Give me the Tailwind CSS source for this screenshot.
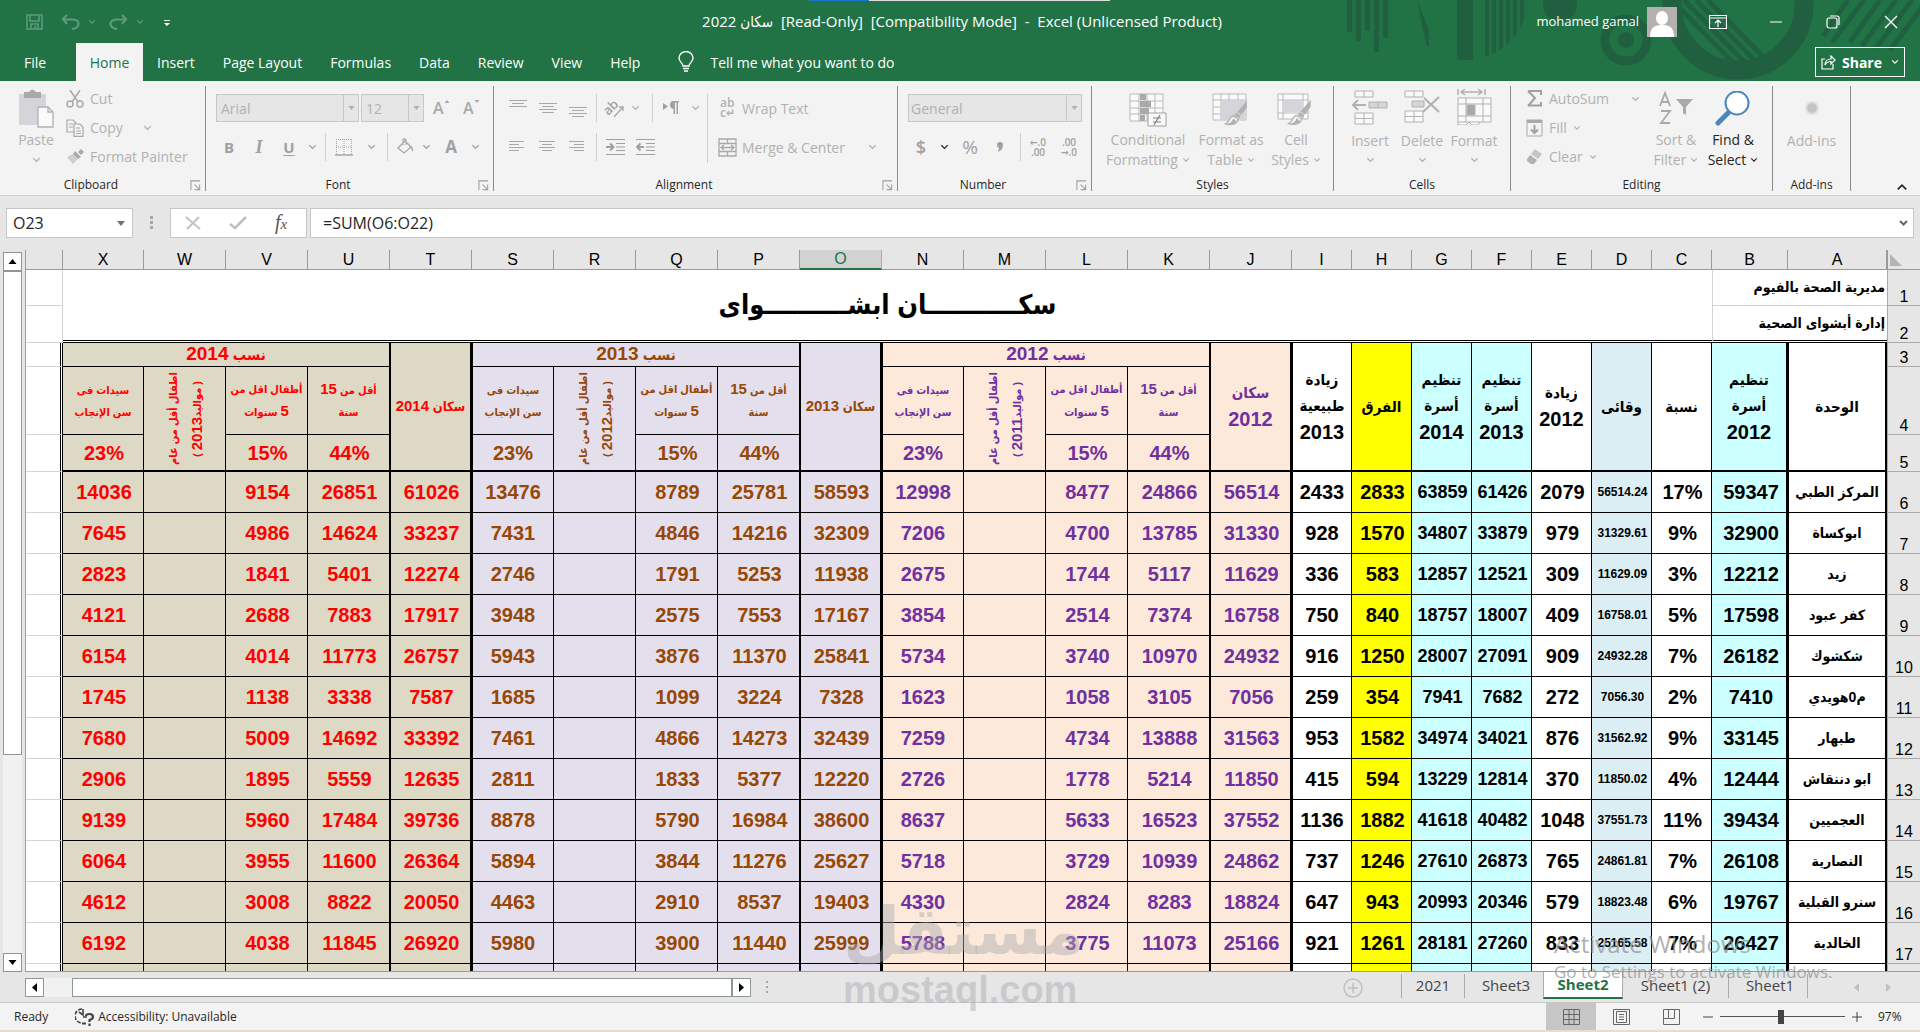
<!DOCTYPE html>
<html lang="en">
<head>
    <meta charset="UTF-8">
    <meta name="viewport" content="width=device-width, initial-scale=1.0">
    <title>سكان 2022 - Excel</title>
    <script src="https://cdn.jsdelivr.net/npm/@tailwindcss/browser@4"></script>
</head>
<body class="flex flex-col h-screen overflow-hidden bg-[#e6e6e6] font-['Open_Sans','DejaVu_Sans_Condensed','DejaVu_Sans',sans-serif] text-[13px] text-[#262626]">

    <!-- Shared icons -->
    <svg class="hidden">
        <symbol id="chev" viewBox="0 0 10 6"><path d="M1.5 1 5 4.5 8.5 1" fill="none" stroke="currentColor" stroke-width="1.4"/></symbol>
        <symbol id="caret" viewBox="0 0 8 5"><path d="M0 0H8L4 5Z" fill="currentColor"/></symbol>
        <symbol id="launch" viewBox="0 0 12 12"><path d="M1 11V1H11M5 5 10 10M10.500 5V10.500H5" fill="none" stroke="#a0a0a0" stroke-width="1.200"/></symbol>
        <symbol id="brush" viewBox="0 0 28 34"><path d="M27 1V9L20 19 15 15Z" fill="#b1b1b1"/><path d="M14 16 19 20 17 23 11 19Z" fill="#b1b1b1"/><path d="M10 20C5 20 6 27 0 30 6 32 15 31 16 24Z" fill="#f2f2f2" stroke="#b1b1b1" stroke-width="1.500"/><path d="M1 30C7 30 9 26 10 23L14 27C12 31 7 32 1 30Z" fill="#b1b1b1"/></symbol>
    </svg>

    <!-- Title bar and tabs -->
    <header class="relative shrink-0 bg-[#217346] text-white">
        <svg class="absolute top-0 right-0 w-[580px] h-[81px]" viewBox="1340 0 580 81" fill="#206040">
            <clipPath id="disc"><circle cx="1466" cy="-2" r="62"/></clipPath>
            <clipPath id="ringLeft"><path d="M1640 0H1760L1790 81H1700Q1668 50 1662 0Z"/></clipPath>
            <path d="M1347 0h5v32h-5zM1356 0h5v41h-5zM1365 0h5v31h-5zM1374 0h5v52h-5zM1383 0h5v38h-5z"/>
            <g clip-path="url(#disc)"><path d="M1404 0h13l12 30v33h17V0h-42zM1457 0h16v62h-16zM1485 0h4v62h-4zM1492 0h4v62h-4zM1499 0h4v62h-4zM1506 0h4v62h-4zM1513 0h4v62h-4zM1520 0h4v62h-4zM1417 0h29v60h-17z"/></g>
            <circle cx="1560" cy="5" r="17"/>
            <circle cx="1626" cy="40" r="21" fill="none" stroke="#206040" stroke-width="9"/>
            <circle cx="1626" cy="40" r="8"/>
            <circle cx="1738" cy="4" r="66" fill="none" stroke="#206040" stroke-width="19"/>
            <g clip-path="url(#ringLeft)" stroke="#206040" stroke-width="5"><path d="M1672 0 1745 75M1684 0 1752 70M1696 0 1762 68M1708 0 1770 64"/></g>
            <path d="M1848 0 1823 36M1864 0 1832 42M1880 0 1850 42M1896 0 1862 46M1912 0 1876 48M1926 2 1890 50" stroke="#206040" stroke-width="5"/>
        </svg>
        <div class="absolute top-0 left-[809px] flex h-px w-[301px]"><span class="w-[60px] bg-[#1976d2]"></span><span class="flex-1 bg-[#dcdcdc]"></span></div>

        <div class="relative flex items-center h-[43px]">
            <div class="flex-1 flex items-center pl-[26px] text-[#5e9a79]">
                <button aria-label="Save"><svg class="w-[18px] h-[18px]" viewBox="0 0 18 18"><path d="M1 2H16V16H1ZM4 2V8H13V2M5 16V11H12V16M9 13V16" fill="none" stroke="currentColor" stroke-width="1.6"/></svg></button>
                <button aria-label="Undo" class="ml-[17px] flex items-center gap-2"><svg class="w-[19px] h-4" viewBox="0 0 19 16"><path d="M6 1 2 5 6 10M2 5.500H12C20 6 19 14 11 15" fill="none" stroke="currentColor" stroke-width="2.200"/></svg><svg class="w-[8px] h-[6px]"><use href="#chev"/></svg></button>
                <button aria-label="Redo" class="ml-[13px] flex items-center gap-2"><svg class="w-[19px] h-4" viewBox="0 0 19 16"><path d="M13 1 17 5 13 10M17 5.500H7C-1 6 0 14 8 15" fill="none" stroke="currentColor" stroke-width="2.200"/></svg><svg class="w-[8px] h-[6px]"><use href="#chev"/></svg></button>
                <button aria-label="Customize" class="ml-5 mt-1 text-white"><svg class="w-[6px] h-[7px]" viewBox="0 0 6 7"><path d="M0 0H6V1H0ZM0 3H6L3 6Z" fill="currentColor"/></svg></button>
            </div>
            <h1 class="text-[15px] whitespace-pre" dir="ltr"><bdi>سكان 2022</bdi>  [Read-Only]  [Compatibility Mode]  -  Excel (Unlicensed Product)</h1>
            <div class="flex-1 flex items-center justify-end pr-[22px]">
                <span>mohamed gamal</span>
                <svg class="ml-2 w-[30px] h-[30px] bg-[#b3b0ad]" viewBox="0 0 30 30" fill="#fff"><ellipse cx="15" cy="11" rx="6" ry="7"/><path d="M3 30C3 20 8 18 15 18S27 20 27 30Z"/></svg>
                <button aria-label="Ribbon options" class="ml-8"><svg class="w-[18px] h-[14px]" viewBox="0 0 18 14" fill="none" stroke="#fff"><path d="M.5.5H17.500V13.500H.5ZM.5 3H17.500M9 12V5M6 8 9 5 12 8" stroke-width="1.200"/></svg></button>
                <button aria-label="Minimize" class="ml-[43px]"><svg class="w-3 h-3" viewBox="0 0 12 12"><path d="M0 6H12" stroke="#fff"/></svg></button>
                <button aria-label="Restore" class="ml-11"><svg class="w-[14px] h-[14px]" viewBox="0 0 14 14" fill="none" stroke="#fff" stroke-width="1.200"><rect x="1" y="3" width="10" height="10" rx="2"/><path d="M4 1H11Q13 1 13 3V10"/></svg></button>
                <button aria-label="Close" class="ml-[44px]"><svg class="w-[14px] h-[14px]" viewBox="0 0 14 14"><path d="M1 1 13 13M13 1 1 13" stroke="#fff" stroke-width="1.300"/></svg></button>
            </div>
        </div>

        <nav class="relative flex items-center h-[38px] pl-2 text-[14px]">
            <a href="#" class="w-[68px] pl-4">File</a>
            <a href="#" class="flex items-center justify-center w-[67px] h-full bg-[#f3f3f3] text-[#217346]">Home</a>
            <a href="#" class="px-[14px]">Insert</a>
            <a href="#" class="px-[14px]">Page Layout</a>
            <a href="#" class="px-[14px]">Formulas</a>
            <a href="#" class="px-[14px]">Data</a>
            <a href="#" class="px-[14px]">Review</a>
            <a href="#" class="px-[14px]">View</a>
            <a href="#" class="px-[14px]">Help</a>
            <a href="#" class="flex items-center gap-4 pl-6">
                <svg class="w-4 h-[22px]" viewBox="0 0 16 22" fill="none" stroke="#fff" stroke-width="1.400"><path d="M5 15C5 12 1 11 1 7A7 6.500 0 0 1 15 7C15 11 11 12 11 15ZM5 17.500H11M6 20H10"/></svg>
                Tell me what you want to do
            </a>
            <button class="ml-auto mr-[15px] flex items-center gap-[6px] h-[30px] px-[5px] border border-white font-bold">
                <svg class="w-[15px] h-[15px]" viewBox="0 0 15 15" fill="none" stroke="#fff" stroke-width="1.200"><path d="M4 4H1V14H12V9M4 10C4 6 7 4 10 4V1L14 5 10 9V6.500C7 6.500 5 8 4 10Z"/></svg>
                Share
                <svg class="ml-[3px] w-[8px] h-[6px]"><use href="#chev"/></svg>
            </button>
        </nav>
    </header>

    <!-- Ribbon -->
    <div class="shrink-0 flex h-[115px] pt-[5px] pb-1 bg-[#f3f3f3] border-b border-[#d2d2d2] text-[#b1b1b1] text-[14px]">
        <section class="flex flex-col w-[206px] border-r border-[#8a8a8a]">
            <div class="flex-1 flex">
                <button class="flex flex-col items-center w-[60px] ml-[6px] pt-[3px]">
                    <svg class="w-9 h-10" viewBox="0 0 36 40"><path d="M1 5H28V36H1Z" fill="#d6d4da"/><path d="M6 3H11Q14 -2 18 3H23V9H6Z" fill="#a9a9a9"/><path d="M20 18H30L35 23V38H20ZM30 18V23H35" fill="#fafafa" stroke="#b1b1b1" stroke-width="1.300"/></svg>
                    <span class="leading-[22px]">Paste</span>
                    <svg class="mt-[6px] w-[9px] h-[6px]"><use href="#chev"/></svg>
                </button>
                <div class="flex flex-col -mt-[2px]">
                    <button class="flex items-center gap-[6px] h-[29px]"><svg class="w-[18px] h-[18px]" viewBox="0 0 18 18" fill="none" stroke="#a9a9a9" stroke-width="1.500"><path d="M4 0 12 12M14 0 6 12"/><circle cx="4" cy="14" r="3"/><circle cx="14" cy="14" r="3"/></svg>Cut</button>
                    <button class="flex items-center gap-[6px] h-[29px]"><svg class="w-[18px] h-[18px]" viewBox="0 0 18 18" fill="#f3f3f3" stroke="#a9a9a9" stroke-width="1.200"><path d="M1 1H7L10 4V13H1ZM3 5H7M3 8H7"/><path d="M8 5H14L17 8V17.400H8ZM10 9H14M10 12H15M10 14.500H15"/></svg>Copy<svg class="ml-[14px] w-[9px] h-[6px]"><use href="#chev"/></svg></button>
                    <button class="flex items-center gap-[6px] h-[29px]"><svg class="w-[18px] h-[16px]" viewBox="0 0 18 16"><path d="M1 8 7 5 12 10 7 15Z" fill="#cfcdd2"/><path d="M7 5 9 2 15 8 12 10ZM12 3 15 0 18 3 15 6Z" fill="#a9a9a9"/></svg>Format Painter</button>
                </div>
            </div>
            <div class="flex items-center h-3 pr-1 text-[12px] leading-3 text-[#262626]"><span class="flex-1 pr-2 text-center">Clipboard</span><svg class="w-[11px] h-[11px]"><use href="#launch"/></svg></div>
        </section>

        <section class="flex flex-col w-[288px] border-r border-[#8a8a8a]">
            <div class="flex-1 flex flex-col gap-[11px] pt-2">
                <div class="flex items-center h-7 pl-[10px]">
                    <label class="relative w-[143px]"><select aria-label="Font" disabled class="w-full h-7 pl-1 appearance-none border border-[#c8c8c8] bg-[#e6e6e6] text-[#b1b1b1]"><option>Arial</option></select><span class="absolute right-0 top-0 flex items-center justify-center w-4 h-7 border-l border-[#c8c8c8]"><svg class="w-[7px] h-1"><use href="#caret"/></svg></span></label>
                    <label class="relative ml-[2px] w-[63px]"><select aria-label="Font size" disabled class="w-full h-7 pl-1 appearance-none border border-[#c8c8c8] bg-[#e6e6e6] text-[#b1b1b1]"><option>12</option></select><span class="absolute right-0 top-0 flex items-center justify-center w-4 h-7 border-l border-[#c8c8c8]"><svg class="w-[7px] h-1"><use href="#caret"/></svg></span></label>
                    <button class="flex w-[30px] ml-[5px] pl-1 text-[16px] font-semibold text-[#a9a9a9]">A<svg class="mt-1 w-[6px] h-[3px] rotate-180"><use href="#caret"/></svg></button>
                    <button class="flex w-[30px] pl-1 text-[16px] font-semibold text-[#a9a9a9]">A<svg class="mt-1 w-[6px] h-[3px]"><use href="#caret"/></svg></button>
                </div>
                <div class="flex items-center h-7 pl-2 text-[#a0a0a0]">
                    <button class="w-[30px] font-bold text-[15px]">B</button>
                    <button class="w-[30px] font-bold italic font-['Liberation_Serif'] text-[18px]">I</button>
                    <button class="w-[30px] font-bold text-[15px] underline underline-offset-2">U</button>
                    <svg class="mx-1 w-[9px] h-[6px]"><use href="#chev"/></svg>
                    <span class="w-px h-7 ml-1 bg-[#d0d0d0]"></span>
                    <svg class="ml-[9px] w-[18px] h-[18px]" viewBox="0 0 18 18" stroke="#a9a9a9"><path d="M1.500 1V16M16.500 1V16M9 1V16M1 1.500H17M1 9H17" stroke-dasharray="1 1"/><path d="M0 17H18" stroke-width="1.500"/></svg>
                    <svg class="ml-[14px] w-[9px] h-[6px]"><use href="#chev"/></svg>
                    <span class="w-px h-7 ml-[11px] bg-[#d0d0d0]"></span>
                    <svg class="ml-[9px] w-[17px] h-[18px]" viewBox="0 0 17 18"><path d="M1 10 8 3 14 9 7 15ZM6 7V2Q7 0 9 2V7" fill="none" stroke="#a9a9a9" stroke-width="1.300"/><path d="M13 7Q17 10 16 14 14 12 13 7Z" fill="#a9a9a9"/></svg>
                    <svg class="ml-2 w-[9px] h-[6px]"><use href="#chev"/></svg>
                    <button class="w-[40px] font-bold text-[17px]">A</button>
                    <svg class="w-[9px] h-[6px]"><use href="#chev"/></svg>
                </div>
            </div>
            <div class="flex items-center h-3 pr-1 text-[12px] leading-3 text-[#262626]"><span class="flex-1 pr-2 text-center">Font</span><svg class="w-[11px] h-[11px]"><use href="#launch"/></svg></div>
        </section>

        <section class="flex flex-col w-[404px] border-r border-[#8a8a8a]">
            <div class="flex-1 flex pt-2">
                <div class="flex flex-col gap-[11px] w-[214px] border-r border-[#d0d0d0] mb-4">
                    <div class="flex items-center h-7 pl-[15px]">
                        <svg class="w-[18px] h-[18px] mr-3" viewBox="0 0 18 18" stroke="#a9a9a9"><path d="M0 1.500H18M3 4.500H15M0 7.500H18"/></svg>
                        <svg class="w-[18px] h-[18px] mr-3" viewBox="0 0 18 18" stroke="#a9a9a9"><path d="M0 4.500H18M3 7.500H15M0 10.500H18M3 13.500H15"/></svg>
                        <svg class="w-[18px] h-[18px] mr-[9px]" viewBox="0 0 18 18" stroke="#a9a9a9"><path d="M0 8.500H18M3 11.500H15M0 14.500H18M3 17.500H15"/></svg>
                        <span class="w-px h-7 bg-[#d0d0d0]"></span>
                        <span class="ml-[6px] w-[15px] text-[13px] font-semibold -rotate-45 text-[#a0a0a0]">ab</span>
                        <svg class="w-[10px] h-[14px] -ml-1 mt-2" viewBox="0 0 10 14" fill="none" stroke="#a9a9a9" stroke-width="1.300"><path d="M0 12 9 2M5 2H9V6"/></svg>
                        <svg class="ml-[7px] w-[9px] h-[6px]"><use href="#chev"/></svg>
                        <span class="w-px h-7 ml-3 bg-[#d0d0d0]"></span>
                        <svg class="ml-[10px] w-4 h-[14px]" viewBox="0 0 16 14" fill="#a0a0a0"><path d="M0 2 5 5.500 0 9ZM9 0H16V1.500H15V13H13.500V1.500H12V13H10.500V8Q7 7 7 4T9 0Z"/></svg>
                        <svg class="ml-3 w-[9px] h-[6px]"><use href="#chev"/></svg>
                    </div>
                    <div class="flex items-center h-7 pl-[15px]">
                        <svg class="w-[15px] h-[14px] mr-[15px]" viewBox="0 0 15 14" stroke="#a9a9a9"><path d="M0 1.500H15M0 4.500H10M0 7.500H15M0 10.500H10"/></svg>
                        <svg class="w-[16px] h-[14px] mr-[14px]" viewBox="0 0 16 14" stroke="#a9a9a9"><path d="M0 1.500H16M3 4.500H13M0 7.500H16M3 10.500H13"/></svg>
                        <svg class="w-[15px] h-[14px] mr-3" viewBox="0 0 15 14" stroke="#a9a9a9"><path d="M0 1.500H15M5 4.500H15M0 7.500H15M5 10.500H15"/></svg>
                        <span class="w-px h-7 bg-[#d0d0d0]"></span>
                        <svg class="ml-[9px] w-[19px] h-4" viewBox="0 0 19 16" fill="none" stroke="#a0a0a0"><path d="M0 .5H19M10 4.500H19M10 8H19M10 11.500H19M0 15.500H19"/><path d="M0 8H7M4 4.500 7.500 8 4 11.500" stroke-width="2"/></svg>
                        <svg class="ml-[11px] w-[19px] h-4" viewBox="0 0 19 16" fill="none" stroke="#a0a0a0"><path d="M0 .5H19M10 4.500H19M10 8H19M10 11.500H19M0 15.500H19"/><path d="M8 8H1M4.500 4.500 1 8 4.500 11.500" stroke-width="2"/></svg>
                    </div>
                </div>
                <div class="flex flex-col gap-[11px] pl-[10px]">
                    <button class="flex items-center gap-[5px] h-7"><span class="flex flex-col w-[19px] pl-[2px] text-left text-[12px] leading-[10px] font-semibold"><span>ab</span><span>c↵</span></span>Wrap Text</button>
                    <button class="flex items-center gap-[5px] h-7"><svg class="w-[19px] h-[19px]" viewBox="0 0 19 19" fill="none" stroke="#a9a9a9" stroke-width="1.300"><path d="M1 1H18V18H1ZM1 5.500H18M1 13.500H18M9.500 1V5.500M9.500 13.500V18M3 9.500H16M6 7 3 9.500 6 12M13 7 16 9.500 13 12"/></svg>Merge &amp; Center<svg class="ml-[18px] w-[9px] h-[6px]"><use href="#chev"/></svg></button>
                </div>
            </div>
            <div class="flex items-center h-3 pr-1 text-[12px] leading-3 text-[#262626]"><span class="flex-1 pr-2 text-center">Alignment</span><svg class="w-[11px] h-[11px]"><use href="#launch"/></svg></div>
        </section>

        <section class="flex flex-col w-[194px] border-r border-[#8a8a8a]">
            <div class="flex-1 flex flex-col gap-[11px] pt-2 pl-[10px]">
                <label class="relative w-[174px] h-7"><select aria-label="Number format" disabled class="w-full h-7 pl-[2px] appearance-none border border-[#c8c8c8] bg-[#e6e6e6] text-[#b1b1b1]"><option>General</option></select><span class="absolute right-0 top-0 flex items-center justify-center w-4 h-7 border-l border-[#c8c8c8]"><svg class="w-[7px] h-1"><use href="#caret"/></svg></span></label>
                <div class="flex items-center h-7 text-[#a0a0a0]">
                    <button class="w-[26px] text-[18px] font-semibold">$</button>
                    <svg class="ml-[6px] w-[9px] h-[6px] text-[#262626]"><use href="#chev"/></svg>
                    <button class="w-[42px] text-[19px]">%</button>
                    <button class="w-[18px]"><svg class="mx-auto w-[6px] h-[10px]" viewBox="0 0 6 10"><path d="M0 3Q0 0 3 0T6 3Q6 8 1 10L2 6Q0 5 0 3Z" fill="#a0a0a0"/></svg></button>
                    <span class="w-px h-7 ml-[11px] bg-[#d0d0d0]"></span>
                    <button class="flex flex-col w-[34px] items-center text-[10px] leading-[10px] font-semibold"><span>←.0</span><span>.00</span></button>
                    <button class="flex flex-col w-[28px] items-center text-[10px] leading-[10px] font-semibold"><span>.00</span><span>→.0</span></button>
                </div>
            </div>
            <div class="flex items-center h-3 pr-1 text-[12px] leading-3 text-[#262626]"><span class="flex-1 pr-2 text-center">Number</span><svg class="w-[11px] h-[11px]"><use href="#launch"/></svg></div>
        </section>

        <section class="flex flex-col w-[242px] border-r border-[#8a8a8a]">
            <div class="flex-1 flex pt-[7px] pl-[11px] leading-5">
                <button class="flex flex-col items-center w-[90px]">
                    <svg class="w-[38px] h-[34px]" viewBox="0 0 38 34"><path d="M1 1H34V28H1ZM1 8H34M1 15H34M1 21H34M10 1V28M18 1V28M26 1V28" fill="#fafafa" stroke="#b9b9b9"/><path d="M11 1H17V7H11ZM11 8H22V14H11ZM11 15H20V21H11ZM11 22H16V28H11Z" fill="#a9a9a9"/><path d="M19 20H37V33H19Z" fill="#fafafa" stroke="#a0a0a0"/><path d="M24 25H32M24 29H32M31 22 25 32" stroke="#808080" stroke-width="1.200"/></svg>
                    <span class="mt-[3px]">Conditional</span><span class="flex items-center gap-1 whitespace-nowrap">Formatting<svg class="w-[8px] h-[6px]"><use href="#chev"/></svg></span>
                </button>
                <button class="flex flex-col items-center w-[76px]">
                    <svg class="w-[38px] h-[34px]" viewBox="0 0 38 34"><path d="M1 1H34V27H1ZM1 7H34M1 14H34M1 21H34M9 1V27M17 1V27M26 1V27" fill="#fafafa" stroke="#b9b9b9"/><path d="M9 7H33V27H9Z" fill="#d6d4da"/><use href="#brush" x="11" y="7" width="27" height="27"/></svg>
                    <span class="mt-[3px] whitespace-nowrap">Format as</span><span class="flex items-center gap-1">Table<svg class="w-[8px] h-[6px]"><use href="#chev"/></svg></span>
                </button>
                <button class="flex flex-col items-center w-[54px]">
                    <svg class="w-[38px] h-[34px]" viewBox="0 0 38 34"><path d="M1 1H31V26H1ZM1 7H31M1 20H31M6 1V26M26 1V26" fill="#fafafa" stroke="#b9b9b9"/><path d="M6 7H25V19H6Z" fill="#d6d4da"/><use href="#brush" x="9" y="6" width="28" height="28"/></svg>
                    <span class="mt-[3px]">Cell</span><span class="flex items-center gap-1">Styles<svg class="w-[8px] h-[6px]"><use href="#chev"/></svg></span>
                </button>
            </div>
            <div class="h-3 text-[12px] leading-3 text-center text-[#262626]">Styles</div>
        </section>

        <section class="flex flex-col w-[177px] border-r border-[#8a8a8a]">
            <div class="flex-1 flex pt-[3px] pl-[10px]">
                <button class="flex flex-col items-center w-[52px]">
                    <svg class="w-9 h-9" viewBox="0 0 36 36" fill="#fafafa" stroke="#b1b1b1"><path d="M3 2H21V8H3ZM12 2V8M3 24H21V35H3ZM12 24V35M3 29.500H21"/><path d="M17 13H35V19H17ZM26 13V19" fill="#d6d4da"/><path d="M14 16H1M6 11 1 16 6 21" fill="none" stroke-width="2"/></svg>
                    <span class="mt-[5px] leading-[22px]">Insert</span><svg class="mt-[5px] w-[9px] h-[6px]"><use href="#chev"/></svg>
                </button>
                <button class="flex flex-col items-center w-[52px]">
                    <svg class="w-9 h-9" viewBox="0 0 36 36" fill="#fafafa" stroke="#b1b1b1"><path d="M1 2H19V8H1ZM10 2V8M1 22H19V33H1ZM10 22V33M1 27.500H19"/><path d="M8 12H20V18H8Z" fill="#d6d4da"/><path d="M20 9 35 23M35 8 19 23" fill="none" stroke-width="2"/></svg>
                    <span class="mt-[5px] leading-[22px]">Delete</span><svg class="mt-[5px] w-[9px] h-[6px]"><use href="#chev"/></svg>
                </button>
                <button class="flex flex-col items-center w-[52px]">
                    <svg class="w-9 h-9" viewBox="0 0 36 36" fill="#fafafa" stroke="#b1b1b1"><path d="M2 0V6M29 0V6M5 3H26M9 0 5 3 9 6M22 0 26 3 22 6" fill="none" stroke-width="1.500"/><path d="M2 9H35V33H2ZM10 9V33M27 9V33M2 15H35M2 27H35M2 33V36H10L13 33 16 36H22L24 33"/><path d="M11 16H19V26H11Z" fill="#a9a9a9"/></svg>
                    <span class="mt-[5px] leading-[22px]">Format</span><svg class="mt-[5px] w-[9px] h-[6px]"><use href="#chev"/></svg>
                </button>
            </div>
            <div class="h-3 text-[12px] leading-3 text-center text-[#262626]">Cells</div>
        </section>

        <section class="flex flex-col w-[262px] border-r border-[#8a8a8a]">
            <div class="flex-1 flex pl-[15px]">
                <div class="flex flex-col w-[122px] -mt-[2px]">
                    <button class="flex items-center gap-[6px] h-[29px]"><svg class="w-[17px] h-[17px]" viewBox="0 0 17 17"><path d="M2 1H15V5M2 1 9 8 2 16M2 15.500H15V12" fill="none" stroke="#a0a0a0" stroke-width="2"/></svg>AutoSum<svg class="ml-auto mr-2 w-[9px] h-[6px]"><use href="#chev"/></svg></button>
                    <button class="flex items-center gap-[6px] h-[29px]"><svg class="w-[17px] h-[18px]" viewBox="0 0 17 18"><path d="M1 1H16V17H1Z" fill="none" stroke="#a9a9a9"/><path d="M1 1H16V4H1Z" fill="#a9a9a9"/><path d="M8.500 6V14M5 10.500 8.500 14 12 10.500" fill="none" stroke="#a0a0a0" stroke-width="2"/></svg>Fill<svg class="w-[8px] h-[6px]"><use href="#chev"/></svg></button>
                    <button class="flex items-center gap-[6px] h-[29px]"><svg class="w-[17px] h-[16px]" viewBox="0 0 17 16"><path d="M9 0 16 5 12 10 5 5Z" fill="#c6c6c6"/><path d="M4 6 11 11 8 15H5L1 12V10Z" fill="#b1b1b1"/></svg>Clear<svg class="w-[8px] h-[6px]"><use href="#chev"/></svg></button>
                </div>
                <button class="flex flex-col items-center w-[56px] pt-[5px] leading-5">
                    <svg class="w-[36px] h-[36px]" viewBox="0 0 36 36" fill="none" stroke="#a9a9a9" stroke-width="1.800"><path d="M2 15 7 2 12 15M4 11H10M3 20H12L3 32H12"/><path d="M18 8H35L28 16V24L25 22V16Z" fill="#a9a9a9" stroke="none"/></svg>
                    <span class="mt-[3px] whitespace-nowrap">Sort &amp;</span><span class="flex items-center gap-1">Filter<svg class="w-[8px] h-[6px]"><use href="#chev"/></svg></span>
                </button>
                <button class="flex flex-col items-center w-[58px] pt-[5px] leading-5 text-[#262626]">
                    <svg class="w-9 h-9" viewBox="0 0 36 36"><path d="M3 32 14 21" stroke="#4a86bf" stroke-width="5" stroke-linecap="round"/><circle cx="22" cy="12" r="11.500" fill="#fff" stroke="#4a86bf" stroke-width="2"/></svg>
                    <span class="mt-[3px] whitespace-nowrap">Find &amp;</span><span class="flex items-center gap-1">Select<svg class="w-[8px] h-[6px]"><use href="#chev"/></svg></span>
                </button>
            </div>
            <div class="h-3 text-[12px] leading-3 text-center text-[#262626]">Editing</div>
        </section>

        <section class="flex flex-col w-[78px] border-r border-[#8a8a8a]">
            <button class="flex-1 flex flex-col items-center justify-start pt-[14px]">
                <svg class="w-4 h-4" viewBox="0 0 16 16"><circle cx="8" cy="8" r="7" fill="#e2e2e2"/><circle cx="8" cy="8" r="5" fill="#c4c4c4"/></svg>
                <span class="mt-[14px] leading-[22px]">Add-ins</span>
            </button>
            <div class="h-3 text-[12px] leading-3 text-center text-[#262626]">Add-ins</div>
        </section>
        <button aria-label="Collapse ribbon" class="ml-auto mr-3 self-end text-[#262626]"><svg class="w-3 h-[8px] rotate-180" viewBox="0 0 10 6"><use href="#chev"/></svg></button>
    </div>

    <!-- Formula bar -->
    <div class="shrink-0 flex h-[54px] pt-3 pl-[6px] pr-[6px] text-[16px]">
        <label class="relative w-[127px] h-[30px]"><input aria-label="Name box" value="O23" class="w-full h-full pl-[6px] border border-[#c6c6c6] bg-white"><svg class="absolute right-2 top-[13px] w-[8px] h-[5px] text-[#737373]"><use href="#caret"/></svg></label>
        <svg class="mx-[16px] mt-2 w-[5px] h-[14px]" viewBox="0 0 5 14" fill="#a6a6a6"><path d="M1 0h3v3H1zM1 5h3v3H1zM1 10h3v3H1z"/></svg>
        <div class="flex items-center w-[137px] h-[30px] border border-[#c6c6c6] bg-white">
            <button aria-label="Cancel" class="ml-[14px]"><svg class="w-4 h-[14px]" viewBox="0 0 16 14"><path d="M1 1 15 13M14 1 2 13" stroke="#c0c0c0" stroke-width="1.800"/></svg></button>
            <button aria-label="Enter" class="ml-[28px]"><svg class="w-[18px] h-[14px]" viewBox="0 0 18 14"><path d="M1 8 6 12 17 1" fill="none" stroke="#c0c0c0" stroke-width="2.600"/></svg></button>
            <button aria-label="Insert function" class="ml-[28px] font-['Liberation_Serif'] italic text-[20px] leading-5 text-[#555]">f<span class="text-[15px]">x</span></button>
        </div>
        <label class="relative flex-1 ml-[3px] h-[30px]"><input aria-label="Formula" value="=SUM(O6:O22)" class="w-full h-full pl-3 border border-[#c6c6c6] bg-white"><svg class="absolute right-[6px] top-3 w-[9px] h-[6px]" viewBox="0 0 9 6"><path d="M1 1 4.500 4.500 8 1" fill="none" stroke="#666" stroke-width="2"/></svg></label>
    </div>

    <!-- Sheet -->
    <main class="relative flex-1 flex min-h-0 pl-[3px]">
        <div class="flex flex-col w-[19px] mr-[3px] pt-[2px] bg-[#e6e6e6]">
            <button aria-label="Scroll up" class="flex items-center justify-center h-[19px] bg-white border border-[#8e9893]"><svg class="w-[9px] h-[5px] rotate-180 text-black"><use href="#caret"/></svg></button>
            <div class="flex-1 bg-[#f1f1f1]"><div class="h-[71%] bg-white border border-[#8e9893]"></div></div>
            <button aria-label="Scroll down" class="flex items-center justify-center h-[19px] bg-white border border-[#8e9893]"><svg class="w-[9px] h-[5px] text-black"><use href="#caret"/></svg></button>
        </div>
        <div class="flex-1 overflow-hidden border-l border-b border-[#9b9b9b] font-['Liberation_Sans','DejaVu_Sans_Condensed','DejaVu_Sans',sans-serif]">
            <table dir="rtl" class="w-full table-fixed border-separate border-spacing-0 text-center bg-white [&_td]:p-0 [&_th]:p-0">
                <colgroup>
                    <col class="w-[33px]"><col class="w-[99px]"><col class="w-[76px]">
                    <col class="w-[60px]"><col class="w-[60px]"><col class="w-[60px]"><col class="w-[60px]"><col class="w-[60px]"><col class="w-[60px]"><col class="w-[60px]">
                    <col class="w-[82px]"><col class="w-[82px]"><col class="w-[82px]"><col class="w-[82px]"><col class="w-[82px]">
                    <col class="w-[82px]"><col class="w-[82px]"><col class="w-[82px]"><col class="w-[82px]"><col class="w-[82px]">
                    <col class="w-[82px]"><col class="w-[82px]"><col class="w-[82px]"><col class="w-[82px]"><col class="w-[81px]">
                    <col>
                </colgroup>
                <thead id="letters"></thead>
                <tbody id="titles" class="font-bold text-black">
                    <tr class="h-9">
                        <th class="bg-[#e6e6e6] border-b border-l border-[#ababab] align-bottom text-[16px] leading-4 font-normal">1</th>
                        <td colspan="2" class="border-b border-l border-[#d4d4d4] text-right text-[14px] pr-[2px]!">مديرية الصحة بالفيوم</td>
                        <td colspan="22" rowspan="2" class="border-b-3 border-double border-black text-[27px] leading-8">سكـــــــــــان ابشــــــــــواى</td>
                        <td class="border-b border-r border-[#d4d4d4]"></td>
                    </tr>
                    <tr class="h-[37px]">
                        <th class="bg-[#e6e6e6] border-b border-l border-[#ababab] align-bottom text-[16px] leading-4 font-normal">2</th>
                        <td colspan="2" class="border-b-3 border-double border-b-black border-l border-l-[#d4d4d4] text-right text-[14px] pr-[2px]!">إدارة أبشواى الصحية</td>
                        <td class="border-b border-r border-[#d4d4d4]"></td>
                    </tr>
                    <tr class="h-6 text-[15px] leading-[26px]">
                        <th class="bg-[#e6e6e6] border-b border-l border-[#ababab] align-bottom text-[16px] leading-4 font-normal">3</th>
                        <td rowspan="3" class="border-b-2 border-r-2 border-l border-black">الوحدة</td>
                        <td rowspan="3" class="border-b-2 border-r-2 border-black bg-[#ccffff]">تنظيم<br>أسرة<br><span class="text-[20px]">2012</span></td>
                        <td rowspan="3" class="border-b-2 border-r border-black">نسبة</td>
                        <td rowspan="3" class="border-b-2 border-r border-black bg-[#daeef3]">وقائى</td>
                        <td rowspan="3" class="border-b-2 border-r border-black">زيادة<br><span class="text-[20px]">2012</span></td>
                        <td rowspan="3" class="border-b-2 border-r border-black bg-[#ccffff]">تنظيم<br>أسرة<br><span class="text-[20px]">2013</span></td>
                        <td rowspan="3" class="border-b-2 border-r border-black bg-[#ccffff]">تنظيم<br>أسرة<br><span class="text-[20px]">2014</span></td>
                        <td rowspan="3" class="border-b-2 border-r border-black bg-[#ffff00]">الفرق</td>
                        <td rowspan="3" class="border-b-2 border-r border-l border-black">زيادة<br>طبيعية<br><span class="text-[20px]">2013</span></td>
                        <td rowspan="3" class="border-b-2 border-r-2 border-l border-black bg-[#fde9d9] text-[#7030a0]">سكان<br><span class="text-[20px]">2012</span></td>
                        <td colspan="4" class="border-b border-r border-l border-black bg-[#fde9d9] text-[#7030a0] leading-5">نسب <span class="text-[19px]">2012</span></td>
                        <td rowspan="3" class="border-b-2 border-r-2 border-l border-black bg-[#e4dfec] text-[#974706] text-[13px] whitespace-nowrap">سكان <span class="text-[15px]">2013</span></td>
                        <td colspan="4" class="border-b border-r border-l border-black bg-[#e4dfec] text-[#974706] leading-5">نسب <span class="text-[19px]">2013</span></td>
                        <td rowspan="3" class="border-b-2 border-r-2 border-l border-black bg-[#ddd9c4] text-[#ff0000] text-[13px] whitespace-nowrap">سكان <span class="text-[15px]">2014</span></td>
                        <td colspan="4" class="border-b border-r border-black bg-[#ddd9c4] text-[#ff0000] leading-5">نسب <span class="text-[19px]">2014</span></td>
                        <td class="border-b border-b-[#d4d4d4] border-double border-r-3 border-r-black"></td>
                    </tr>
                    <tr id="subheads" class="h-[68px] text-[11px] leading-[22px] whitespace-nowrap"></tr>
                    <tr id="shares" class="h-[37px] text-[20px]"></tr>
                </tbody>
                <tbody id="data" class="font-bold text-[20px] leading-6 text-black"></tbody>
            </table>
        </div>

        <div class="pointer-events-none absolute left-[843px] -bottom-10 flex flex-col items-start font-bold text-[#a8a8b0]/45">
            <span class="text-[66px] leading-[72px] font-['DejaVu_Sans']">مستقل</span>
            <span class="text-[38px] leading-[44px] font-['Liberation_Sans']">mostaql.com</span>
        </div>
        <div class="pointer-events-none absolute left-[1554px] -bottom-3 text-[#8c8c8c]/70">
            <p class="text-[24px] leading-8">Activate Windows</p>
            <p class="text-[17px] leading-6">Go to Settings to activate Windows.</p>
        </div>
    </main>

    <!-- Scroll bar and sheet tabs -->
    <div class="shrink-0 flex items-start h-[31px] pl-[25px] border-b border-[#c6c6c6] text-[15px] text-[#444]">
        <button aria-label="Scroll left" class="mt-[6px] flex items-center justify-center w-[19px] h-[19px] bg-white border border-[#8e9893]"><svg class="w-[5px] h-[9px]" viewBox="0 0 5 9"><path d="M5 0V9L0 4.500Z"/></svg></button>
        <div class="mt-[6px] w-[688px] h-[19px] pl-7 bg-[#f1f1f1]"><div class="h-full bg-white border border-[#8e9893]"></div></div>
        <button aria-label="Scroll right" class="mt-[6px] flex items-center justify-center w-[19px] h-[19px] bg-white border border-[#8e9893]"><svg class="w-[5px] h-[9px]" viewBox="0 0 5 9"><path d="M0 0V9L5 4.500Z"/></svg></button>
        <svg class="ml-[15px] mt-[9px] w-[3px] h-[13px]" viewBox="0 0 3 13" fill="#a6a6a6"><path d="M0 0h2v2H0zM0 5h2v2H0zM0 10h2v2H0z"/></svg>
        <button aria-label="New sheet" class="ml-auto mt-[6px]"><svg class="w-5 h-5" viewBox="0 0 20 20" fill="none" stroke="#c0c0c0" stroke-width="1.500"><circle cx="10" cy="10" r="9"/><path d="M10 5V15M5 10H15"/></svg></button>
        <div class="flex items-center h-[27px] ml-[38px] text-center">
            <a href="#" class="w-[63px] h-6 border-l border-[#ababab]">2021</a>
            <a href="#" class="w-[79px] h-6 pl-1 border-l border-[#ababab]">Sheet3</a>
            <a href="#" class="w-[80px] h-[28px] -mt-px pt-[2px] bg-white border-x border-[#ababab] border-b-2 border-b-[#217346] font-bold text-[#217346]">Sheet2</a>
            <a href="#" class="w-[106px] h-6 border-r border-[#ababab]">Sheet1 (2)</a>
            <a href="#" class="w-[79px] h-6 pl-1 border-r border-[#ababab]">Sheet1</a>
        </div>
        <div class="flex gap-[27px] mt-[11px] ml-[46px] mr-[29px] text-[#c0c0c0]">
            <svg class="w-[5px] h-[9px]" viewBox="0 0 5 9" fill="currentColor"><path d="M5 0V9L0 4.500Z"/></svg>
            <svg class="w-[5px] h-[9px]" viewBox="0 0 5 9" fill="currentColor"><path d="M0 0V9L5 4.500Z"/></svg>
        </div>
    </div>

    <!-- Status bar -->
    <footer class="shrink-0 flex items-center h-[29px] pl-[14px] pr-[18px] bg-[#f3f3f3] border-b-2 border-[#e8ddd2] text-[12px]">
        <span>Ready</span>
        <svg class="ml-[27px] mr-[3px] w-5 h-[18px]" viewBox="0 0 20 18" fill="none" stroke="#444" stroke-width="1.600"><path d="M7 1A7 7 0 0 0 7 15" stroke-dasharray="4 1.500"/><path d="M4 4 8 7V1M8 9H12" /><path d="M11 8Q11 6 14.500 6T18 9Q18 11 14.500 12V14M14.500 15.500V18M7 15.500H11" stroke-width="2.200"/></svg>
        <span>Accessibility: Unavailable</span>
        <div class="ml-auto flex items-center h-full">
            <button aria-label="Normal" class="flex items-center justify-center w-[50px] h-full bg-[#c6c6c6]"><svg class="w-[17px] h-4" viewBox="0 0 17 16" fill="none" stroke="#666"><path d="M.5.5H16.500V15.500H.5ZM6 0V16M11 0V16M0 5.500H17M0 10.500H17"/></svg></button>
            <button aria-label="Page layout" class="flex items-center justify-center w-[50px] h-full"><svg class="w-[17px] h-4" viewBox="0 0 17 16" fill="none" stroke="#666"><path d="M.5.5H16.500V15.500H.5ZM3.500 2.500H13.500V13.500H3.500ZM6 5.500H11M6 8H11M6 10.500H11"/></svg></button>
            <button aria-label="Page break" class="flex items-center justify-center w-[50px] h-full"><svg class="w-[17px] h-4" viewBox="0 0 17 16" fill="none" stroke="#666"><path d="M.5.5H16.500V15.500H.5ZM5.500 0V9.500H11.500V0M0 9.500H5"/></svg></button>
            <button aria-label="Zoom out" class="ml-[7px]"><svg class="w-[10px] h-[10px]" viewBox="0 0 10 10"><path d="M0 5H10" stroke="#444"/></svg></button>
            <input type="range" aria-label="Zoom" value="49" class="mx-[7px] w-[125px] h-4 appearance-none bg-[linear-gradient(#555,#555)] bg-[length:100%_1px] bg-center bg-no-repeat [&::-webkit-slider-thumb]:appearance-none [&::-webkit-slider-thumb]:w-[6px] [&::-webkit-slider-thumb]:h-[14px] [&::-webkit-slider-thumb]:bg-[#444]">
            <button aria-label="Zoom in"><svg class="w-[10px] h-[10px]" viewBox="0 0 10 10"><path d="M0 5H10M5 0V10" stroke="#444"/></svg></button>
            <span class="ml-4 w-6 whitespace-nowrap">97%</span>
        </div>
    </footer>

    <script>
        // Column styles, from A (right) to X (left)
        const tint = {
            white: 'border-b border-black',
            cyan: 'border-b border-black bg-[#ccffff]',
            sky: 'border-b border-black bg-[#daeef3] text-[12px]',
            yellow: 'border-b border-black bg-[#ffff00]',
            peach: 'border-b border-black bg-[#fde9d9] text-[#7030a0]',
            lilac: 'border-b border-black bg-[#e4dfec] text-[#974706]',
            tan: 'border-b border-black bg-[#ddd9c4] text-[#ff0000]'
        };
        const cols = [
            tint.white + ' border-r-2 border-l text-[14px]', tint.cyan + ' border-r-2', tint.white + ' border-r', tint.sky + ' border-r',
            tint.white + ' border-r', tint.cyan + ' border-r text-[18px]', tint.cyan + ' border-r text-[18px]', tint.yellow + ' border-r', tint.white + ' border-r border-l',
            tint.peach + ' border-r-2 border-l', tint.peach + ' border-r', tint.peach + ' border-r', tint.peach + ' border-r', tint.peach + ' border-r border-l',
            tint.lilac + ' border-r-2 border-l', tint.lilac + ' border-r', tint.lilac + ' border-r', tint.lilac + ' border-r', tint.lilac + ' border-r border-l',
            tint.tan + ' border-r-2 border-l', tint.tan + ' border-r', tint.tan + ' border-r', tint.tan + ' border-r', tint.tan + ' border-r'
        ];
        const rowHead = n => `<th class="bg-[#e6e6e6] border-b border-l border-[#ababab] align-bottom text-[16px] leading-4 font-normal">${n}</th>`;
        const edge = '<td class="border-b border-b-[#d4d4d4] border-double border-r-3 border-r-black"></td>';

        document.getElementById('letters').innerHTML = '<tr class="h-5 text-[16px] leading-[18px] text-black">' +
            '<th class="bg-[#e6e6e6] border-b border-l border-[#9b9b9b]"><svg class="mr-auto ml-[2px] w-3 h-3" viewBox="0 0 12 12"><path d="M0 0V12H12Z" fill="#b4b4b4"/></svg></th>' +
            [...'ABCDEFGHIJKLMNOPQRSTUVWX'].map(c => c === 'O'
                ? '<th class="bg-[#d2d2d2] border-b-2 border-b-[#217346] border-r border-r-[#ababab] font-normal text-[#217346]">O</th>'
                : `<th class="bg-[#e6e6e6] border-b border-r border-[#9b9b9b] font-normal">${c}</th>`).join('') +
            '<th class="bg-[#e6e6e6] border-b border-r border-[#9b9b9b]"></th></tr>';

        const groups = [[10, 2011], [15, 2012], [20, 2013]];
        document.getElementById('subheads').innerHTML = rowHead(4) + groups.map(([i, year]) =>
            `<td class="${cols[i]}">أقل من <span class="text-[15px]">15</span><br>سنة</td>` +
            `<td class="${cols[i + 1]}">أطفال اقل من<br><span class="text-[15px]">5</span> سنوات</td>` +
            `<td rowspan="2" class="${cols[i + 2]} border-b-2"><div class="flex justify-center"><div class="h-[100px] text-[11px] leading-6 text-center [writing-mode:vertical-rl] rotate-180">اطفال أقل من عام<br>( مواليد<span class="text-[15px]">${year}</span> )</div></div></td>` +
            `<td class="${cols[i + 3]}">سيدات فى<br>سن الإنجاب</td>`).join('') + edge;
        document.getElementById('shares').innerHTML = rowHead(5) + groups.map(([i]) =>
            `<td dir="ltr" class="${cols[i]} border-b-2">44%</td><td dir="ltr" class="${cols[i + 1]} border-b-2">15%</td><td dir="ltr" class="${cols[i + 3]} border-b-2">23%</td>`).join('') + edge;

        const rows = [
            ['المركز الطبي', 59347, '17%', '56514.24', 2079, 61426, 63859, 2833, 2433, 56514, 24866, 8477, '', 12998, 58593, 25781, 8789, '', 13476, 61026, 26851, 9154, '', 14036],
            ['ابوكساة', 32900, '9%', '31329.61', 979, 33879, 34807, 1570, 928, 31330, 13785, 4700, '', 7206, 32309, 14216, 4846, '', 7431, 33237, 14624, 4986, '', 7645],
            ['زيد', 12212, '3%', '11629.09', 309, 12521, 12857, 583, 336, 11629, 5117, 1744, '', 2675, 11938, 5253, 1791, '', 2746, 12274, 5401, 1841, '', 2823],
            ['كفر عبود', 17598, '5%', '16758.01', 409, 18007, 18757, 840, 750, 16758, 7374, 2514, '', 3854, 17167, 7553, 2575, '', 3948, 17917, 7883, 2688, '', 4121],
            ['شكشوك', 26182, '7%', '24932.28', 909, 27091, 28007, 1250, 916, 24932, 10970, 3740, '', 5734, 25841, 11370, 3876, '', 5943, 26757, 11773, 4014, '', 6154],
            ['م0هويدي', 7410, '2%', '7056.30', 272, 7682, 7941, 354, 259, 7056, 3105, 1058, '', 1623, 7328, 3224, 1099, '', 1685, 7587, 3338, 1138, '', 1745],
            ['طبهار', 33145, '9%', '31562.92', 876, 34021, 34974, 1582, 953, 31563, 13888, 4734, '', 7259, 32439, 14273, 4866, '', 7461, 33392, 14692, 5009, '', 7680],
            ['ابو دننقاش', 12444, '4%', '11850.02', 370, 12814, 13229, 594, 415, 11850, 5214, 1778, '', 2726, 12220, 5377, 1833, '', 2811, 12635, 5559, 1895, '', 2906],
            ['العجميين', 39434, '11%', '37551.73', 1048, 40482, 41618, 1882, 1136, 37552, 16523, 5633, '', 8637, 38600, 16984, 5790, '', 8878, 39736, 17484, 5960, '', 9139],
            ['النصارية', 26108, '7%', '24861.81', 765, 26873, 27610, 1246, 737, 24862, 10939, 3729, '', 5718, 25627, 11276, 3844, '', 5894, 26364, 11600, 3955, '', 6064],
            ['سنرو القبلية', 19767, '6%', '18823.48', 579, 20346, 20993, 943, 647, 18824, 8283, 2824, '', 4330, 19403, 8537, 2910, '', 4463, 20050, 8822, 3008, '', 4612],
            ['الخالدية', 26427, '7%', '25165.58', 833, 27260, 28181, 1261, 921, 25166, 11073, 3775, '', 5788, 25999, 11440, 3900, '', 5980, 26920, 11845, 4038, '', 6192]
        ];
        document.getElementById('data').innerHTML = rows.map((row, r) =>
            `<tr class="h-[41px]">${rowHead(r + 6)}${row.map((v, c) => `<td dir="${c ? 'ltr' : 'rtl'}" class="${cols[c]}">${v}</td>`).join('')}${edge}</tr>`).join('') +
            `<tr class="h-[41px]">${rowHead('')}${cols.map(c => `<td class="${c}"></td>`).join('')}${edge}</tr>`;
    </script>
</body>
</html>
